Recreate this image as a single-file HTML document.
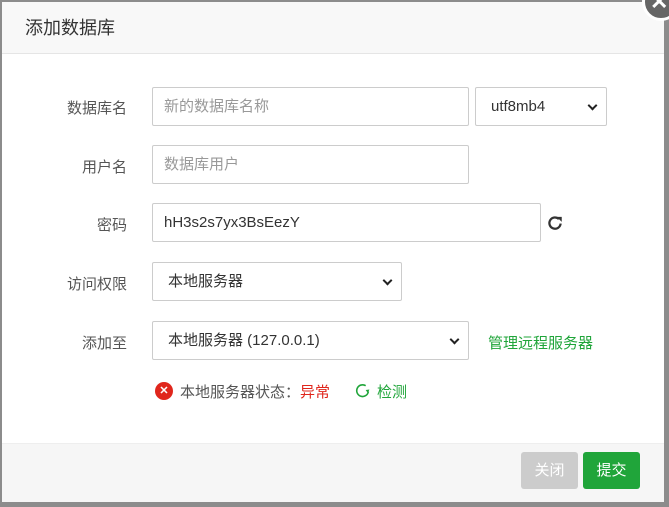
<!DOCTYPE html>
<html><head><meta charset="utf-8"><style>
*{box-sizing:border-box;margin:0;padding:0}
body{width:669px;height:507px;background:#8c8c8c;position:relative;overflow:hidden;font-family:"Liberation Sans","Noto Sans CJK SC",sans-serif;font-size:15px;color:#333}
.dlg{position:absolute;left:2px;top:2px;width:662px;height:500px;background:#fff}
.hd{position:absolute;left:0;top:0;width:100%;height:52px;background:#f8f8f8;border-bottom:1px solid #e5e5e5;font-size:18px;line-height:52px;padding-left:23px;color:#333}
.ft{position:absolute;left:0;top:441px;width:100%;height:59px;background:#f6f6f6;border-top:1px solid #eee}
.lbl{position:absolute;width:127px;text-align:right;left:0;font-size:15px;color:#555}
.in{position:absolute;border:1px solid #ccc;border-radius:2px;height:39px;line-height:37px;padding-left:11px;font-size:15px;color:#333;background:#fff}
.ph{color:#999}
.chev{position:absolute;right:10px;top:14px;width:7px;height:7px;border-right:2px solid #222;border-bottom:2px solid #222;transform:rotate(45deg)}
.btn{position:absolute;top:452px;height:37px;width:57px;border-radius:3px;color:#fff;text-align:center;line-height:37px;font-size:15px}
</style></head><body>
<div class="dlg">
<div class="hd">添加数据库</div>
<div class="ft"></div>
</div>
<div style="position:absolute;left:642px;top:-17px;width:38px;height:38px;border-radius:50%;background:#666;border:3px solid #fff"></div>
<div style="position:absolute;left:650px;top:-9px;color:#fff;font-size:22px;line-height:22px;font-weight:bold">✕</div>

<div class="lbl" style="top:97px">数据库名</div>
<div class="in ph" style="left:152px;top:87px;width:317px">新的数据库名称</div>
<div class="in" style="left:475px;top:87px;width:132px;padding-left:15px">utf8mb4<span class="chev"></span></div>

<div class="lbl" style="top:156px">用户名</div>
<div class="in ph" style="left:152px;top:145px;width:317px">数据库用户</div>

<div class="lbl" style="top:214px">密码</div>
<div class="in" style="left:152px;top:203px;width:389px">hH3s2s7yx3BsEezY</div>
<svg style="position:absolute;left:546px;top:214px" width="18" height="18" viewBox="0 0 16 16"><path d="M13 8.5A5 5 0 1 1 11.5 4.5" fill="none" stroke="#333" stroke-width="2"/><path d="M9.5 2.5L14 2.5 14 7z" fill="#333"/></svg>

<div class="lbl" style="top:273px">访问权限</div>
<div class="in" style="left:152px;top:262px;width:250px;padding-left:15px">本地服务器<span class="chev"></span></div>

<div class="lbl" style="top:332px">添加至</div>
<div class="in" style="left:152px;top:321px;width:317px;padding-left:15px">本地服务器 (127.0.0.1)<span class="chev"></span></div>
<div style="position:absolute;left:488px;top:332px;color:#20a53a">管理远程服务器</div>

<div style="position:absolute;left:155px;top:382px;width:18px;height:18px;border-radius:50%;background:#e0261c;color:#fff;font-size:11px;line-height:18px;text-align:center;font-weight:bold">✕</div>
<div style="position:absolute;left:180px;top:381px;color:#555">本地服务器状态：<span style="color:#e0261c">异常</span></div>
<svg style="position:absolute;left:354px;top:382px" width="17" height="17" viewBox="0 0 16 16"><path d="M13.5 9A5.5 5.5 0 1 1 11 3.5" fill="none" stroke="#20a53a" stroke-width="1.5"/><path d="M13 10.5l1.5 -3.5 -3.5 .5z" fill="#20a53a"/></svg>
<div style="position:absolute;left:377px;top:381px;color:#20a53a">检测</div>

<div class="btn" style="left:521px;background:#ccc">关闭</div>
<div class="btn" style="left:583px;background:#20a53a">提交</div>
</body></html>
